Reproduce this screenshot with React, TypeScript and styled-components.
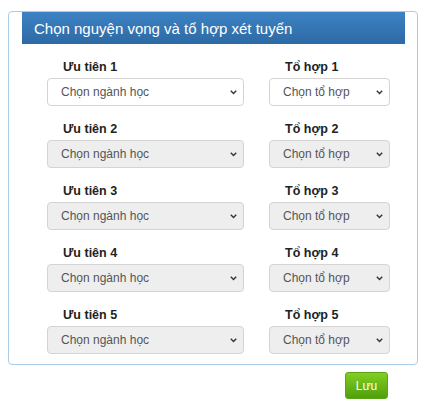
import React from "react";
import styled, { createGlobalStyle } from "styled-components";

const Global = createGlobalStyle`
  html, body { margin: 0; padding: 0; background: #ffffff; }
  body { font-family: "Liberation Sans", Arial, sans-serif; }
`;

const Page = styled.div`
  width: 429px;
  padding: 11px 0 0 8px;
  box-sizing: border-box;
`;

const Panel = styled.section`
  width: 410px;
  box-sizing: border-box;
  border: 1px solid #a9cbe8;
  border-radius: 4px;
  padding: 0 12px 10px 13px;
`;

const Header = styled.h2`
  margin: 0;
  height: 32px;
  display: flex;
  align-items: center;
  padding-left: 12px;
  background: linear-gradient(#3d82c4, #2c6aa4);
  color: #ffffff;
  font-size: 15px;
  font-weight: normal;
`;

const Form = styled.div`
  display: grid;
  grid-template-columns: 197px 121px;
  column-gap: 25px;
  row-gap: 14px;
  padding: 14px 0 0 25px;
`;

const Field = styled.div`
  display: flex;
  flex-direction: column;
  gap: 2px;
`;

const Label = styled.label`
  display: block;
  height: 18px;
  line-height: 18px;
  padding-left: 16px;
  font-size: 12.5px;
  font-weight: bold;
  color: #222;
`;

const SelectWrap = styled.div`
  position: relative;
  height: 28px;
`;

const Select = styled.select<{ $disabled?: boolean }>`
  appearance: none;
  -webkit-appearance: none;
  width: 100%;
  height: 28px;
  box-sizing: border-box;
  margin: 0;
  border: 1px solid #d4d4d4;
  border-radius: 4px;
  padding: 0 0 0 13px;
  font-family: "Liberation Sans", Arial, sans-serif;
  font-size: 12px;
  color: #555;
  background: ${(p) => (p.$disabled ? "#eeeeee" : "#ffffff")};
  opacity: 1;
`;

const Chevron = styled.svg`
  position: absolute;
  right: 7px;
  top: 12px;
  width: 7px;
  height: 5px;
  pointer-events: none;
`;

const Footer = styled.div`
  display: flex;
  justify-content: flex-end;
  width: 410px;
  padding: 7px 30px 0 0;
  box-sizing: border-box;
`;

const SaveButton = styled.button`
  width: 43px;
  height: 27px;
  border: 1px solid #5aa516;
  border-radius: 3px;
  background: linear-gradient(#82ce21, #4f9f0c);
  color: #ffffff;
  font-family: "Liberation Sans", Arial, sans-serif;
  font-size: 12px;
  padding: 0;
`;

const Arrow = () => (
  <Chevron viewBox="0 0 7 5">
    <path d="M0.8 0.8 L3.5 3.6 L6.2 0.8" fill="none" stroke="#333" strokeWidth="1.4" />
  </Chevron>
);

const rows = [1, 2, 3, 4, 5];

export default function App() {
  return (
    <Page>
      <Global />
      <Panel>
        <Header>Chọn nguyện vọng và tổ hợp xét tuyển</Header>
        <Form>
          {rows.map((n) => (
            <React.Fragment key={n}>
              <Field>
                <Label>Ưu tiên {n}</Label>
                <SelectWrap>
                  <Select $disabled={n > 1} disabled={n > 1}>
                    <option>Chọn ngành học</option>
                  </Select>
                  <Arrow />
                </SelectWrap>
              </Field>
              <Field>
                <Label>Tổ hợp {n}</Label>
                <SelectWrap>
                  <Select $disabled={n > 1} disabled={n > 1}>
                    <option>Chọn tổ hợp</option>
                  </Select>
                  <Arrow />
                </SelectWrap>
              </Field>
            </React.Fragment>
          ))}
        </Form>
      </Panel>
      <Footer>
        <SaveButton>Lưu</SaveButton>
      </Footer>
    </Page>
  );
}
